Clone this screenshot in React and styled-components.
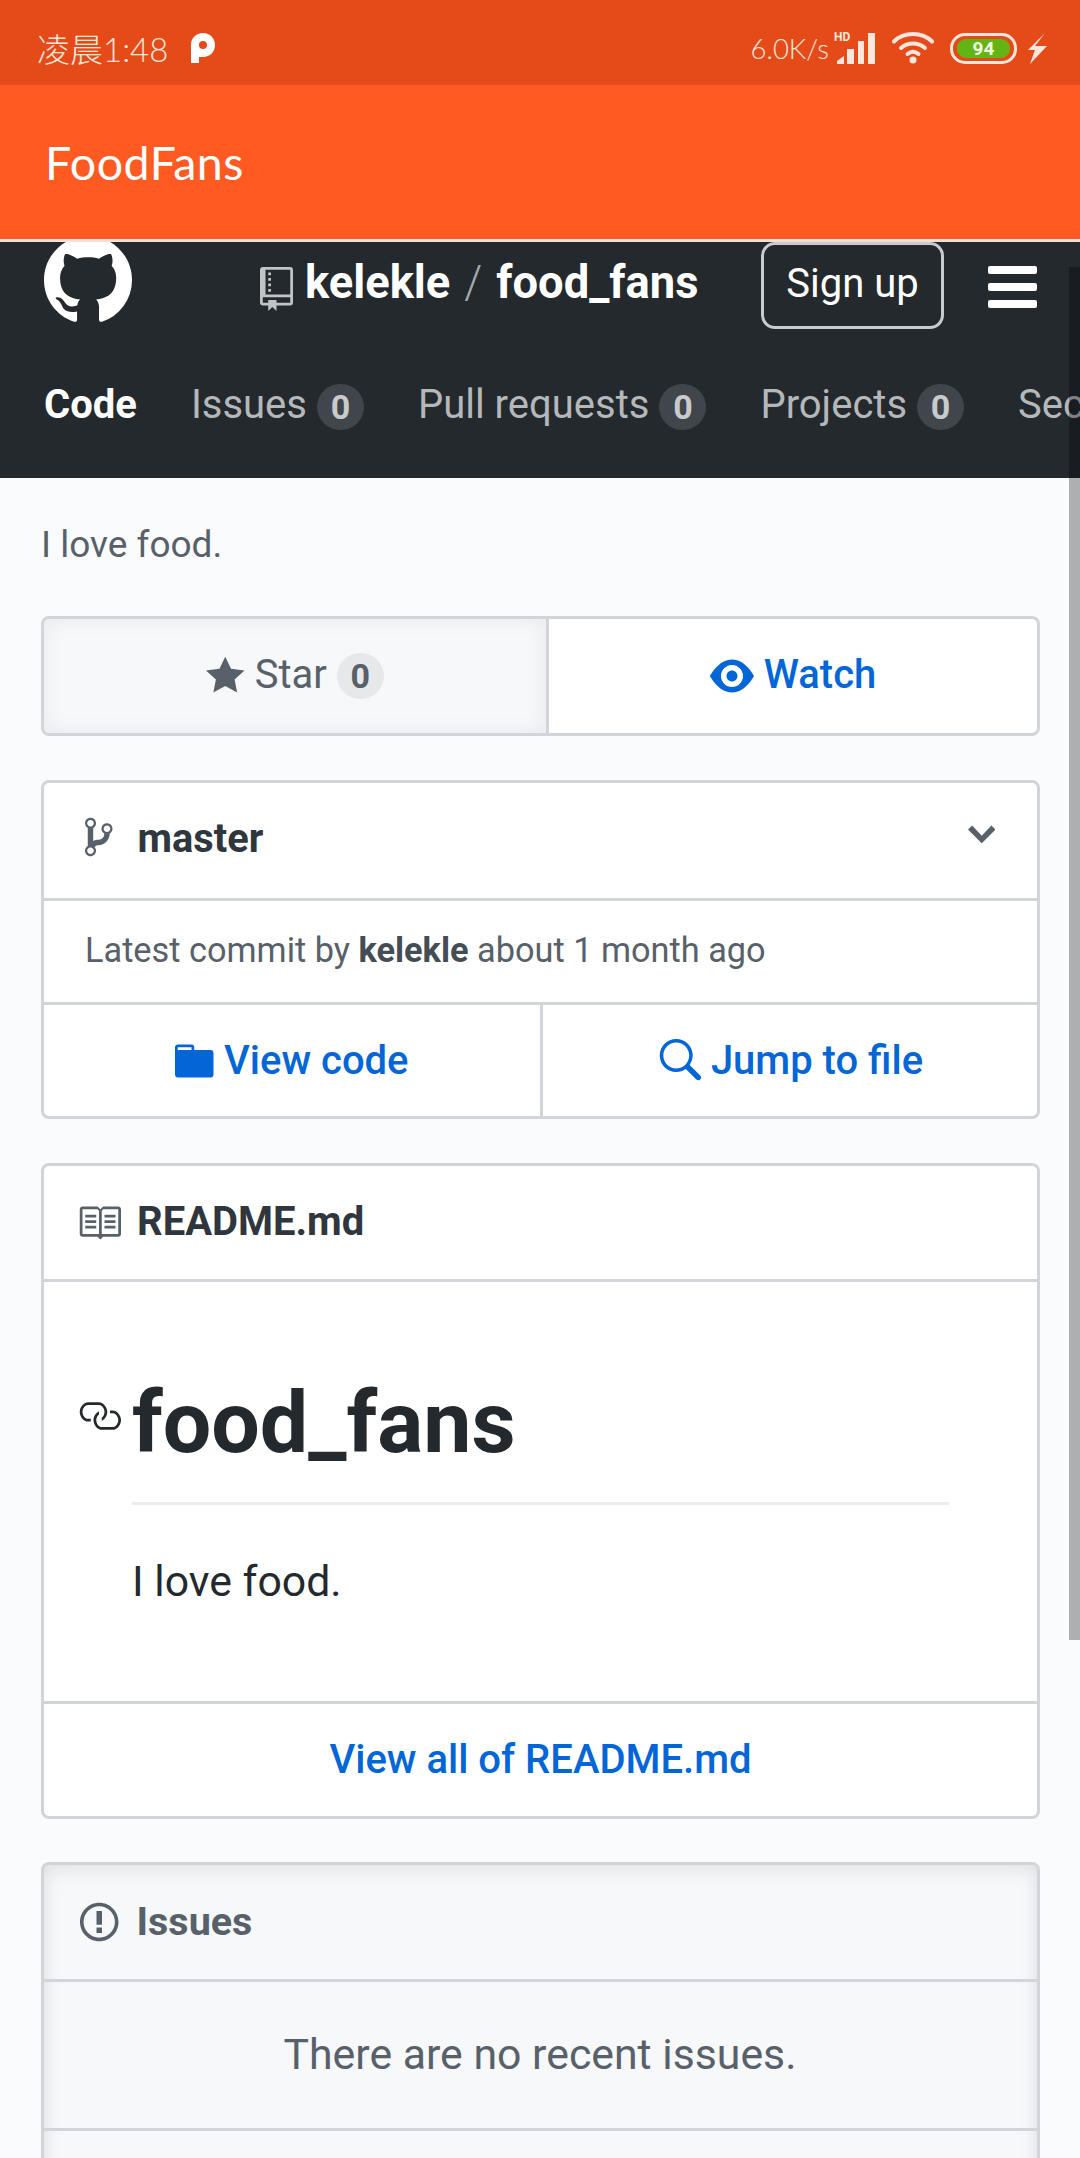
import React from "react";
import styled, { createGlobalStyle } from "styled-components";

const Global = createGlobalStyle`
  html, body { margin: 0; padding: 0; height: 2158px; overflow: hidden; background: #fafbfc; }
  body { font-family: Roboto, "Liberation Sans", sans-serif; color: #24292e; }
  * { box-sizing: border-box; }
  #root { height: 2158px; overflow: hidden; position: relative; }
`;

const StatusBar = styled.div`
  height: 85px; background: #e54b18; color: #fde6dc;
  display: flex; align-items: center; justify-content: space-between;
  padding: 11px 33px 0 37px; font-family: Lato, "Noto Sans CJK SC", sans-serif; font-weight: 300;
`;
const StatusGroup = styled.div`display: flex; align-items: center;`;
const Clock = styled.span`font-size: 33px; font-family: Lato, "Noto Sans CJK SC", sans-serif; font-weight: 300;`;
const Speed = styled.span`font-size: 27.500px;`;
const HdSignal = styled.div`position: relative; width: 41px; height: 32px; margin: 0 16px 0 6px;`;
const HdLabel = styled.span`
  position: absolute; left: -1px; top: -2px; font: 700 12px/14px Roboto, sans-serif; color: #fde6dc;
`;
const Battery = styled.div`
  width: 67px; height: 31px; border: 3px solid #fde6dc; border-radius: 15px; padding: 3px 4px;
  margin: 0 11px 0 16px; display: flex;
`;
const BatteryFill = styled.div`
  flex: 1; background: #62b515; border-radius: 9px; color: #f2ffe0;
  font: 700 19px/19px Roboto, sans-serif; text-align: center;
`;

const AppBar = styled.div`
  height: 154px; background: #ff5a22; color: #fff; display: flex; align-items: center;
  padding-left: 45px; font: 400 46.500px Lato, sans-serif; letter-spacing: 0.5px;
`;
const Divider = styled.div`height: 3px; background: #f0e2da;`;

const Header = styled.header`height: 236px; background: #24292e; overflow: hidden;`;
const TopRow = styled.div`
  display: flex; align-items: center; height: 87px; padding: 0 43px 0 44px;
`;
const Logo = styled.svg`
  width: 88px; height: 88px; fill: #fff; flex: none; align-self: flex-start; margin: -6px 128px 0 0;
`;
const RepoIcon = styled.svg`width: 33px; height: 44px; fill: #c1c4c6; flex: none; margin: 7px 12px 0 0;`;
const RepoTitle = styled.div`font-size: 45.300px; font-weight: 700; color: #fff; margin-top: -6px; white-space: nowrap;`;
const Slash = styled.span`font-weight: 300; color: #a7a9ab; margin: 0 14px;`;
const SignUp = styled.div`
  margin-left: auto; width: 183px; height: 87px; border: 3px solid #c8ccd0; border-radius: 14px; color: #fff;
  font-size: 40px; display: flex; align-items: center; justify-content: center; padding-bottom: 4px;
`;
const Burger = styled.div`
  width: 49px; margin-left: 44px; display: flex; flex-direction: column; gap: 9px; margin-top: 2px;
`;
const BurgerBar = styled.div`height: 8px; background: #fff; border-radius: 2px;`;
const Tabs = styled.nav`
  display: flex; align-items: center; gap: 54px; margin-top: 55px; padding-left: 44px; white-space: nowrap;
`;
const Tab = styled.div`
  display: flex; align-items: center; gap: 10px; font-size: 40px;
  color: ${p => (p.$active ? "#fff" : "#b5b8ba")}; font-weight: ${p => (p.$active ? 700 : 400)};
  margin-top: -6px;
`;
const Counter = styled.span`
  width: 47px; height: 46px; border-radius: 23px; display: flex; align-items: center; justify-content: center;
  font-size: 34px; font-weight: 700; flex: none;
  background: ${p => (p.$light ? "#e6e8ea" : "#41464c")}; color: ${p => (p.$light ? "#586069" : "#c8cacc")};
  margin-top: ${p => (p.$light ? "0" : "6px")};
`;

const Main = styled.main`padding: 38px 40px 0 41px;`;
const Intro = styled.p`margin: 0 0 42px; font-size: 37px; line-height: 58px; color: #586069;`;
const Card = styled.section`
  border: 3px solid #d1d5da; border-radius: 8px; overflow: hidden; margin-bottom: ${p => p.$mb ?? 44}px;
  background: ${p => (p.$muted ? "#f6f8fa" : "#fff")};
  ${p => p.$muted && "box-shadow: inset 0 5px 20px rgba(27,31,35,.07), inset 0 0 16px rgba(27,31,35,.05);"}
`;
const Split = styled.div`display: flex; height: ${p => p.$h}px;`;
const Action = styled.div`
  flex: ${p => (p.$w ? `0 0 ${p.$w}px` : "1")}; display: flex; align-items: center; justify-content: center; gap: 10px;
  font-size: 40px; font-weight: 500; color: #0366d6; min-width: 0;
  & + & { border-left: 3px solid #d1d5da; }
`;
const StarAction = styled(Action)`
  color: #586069; font-weight: 400; background: #f6f8fa;
  box-shadow: inset 0 0 20px rgba(27,31,35,.07);
`;
const RaisedLabel = styled.span`margin-top: -3px;`;
const Row = styled.div`
  height: ${p => p.$h}px; display: flex; align-items: center; padding-left: ${p => p.$pl || 0}px;
  border-bottom: ${p => (p.$noline ? "0" : "3px solid #d1d5da")};
  justify-content: ${p => (p.$center ? "center" : "flex-start")};
`;
const BranchIcon = styled.svg`width: 27.5px; height: 44px; fill: #586069; flex: none; margin: -7px 25px 0 0;`;
const BranchName = styled.strong`font-size: 39.800px; font-weight: 700; color: #2f363d; margin-top: -4px;`;
const Chevron = styled.svg`
  width: 27.5px; height: 44px; fill: #586069; flex: none; margin: -12px 42px 0 auto;
`;
const Commit = styled.div`font-size: 34.300px; color: #586069; margin-top: -3px; strong { font-weight: 700; color: #444d56; }`;
const Icon = styled.svg`height: 44px; width: ${p => p.$w || 44}px; fill: ${p => p.$c || "#0366d6"}; flex: none;`;
const ReadmeTitle = styled.strong`font-size: 40px; font-weight: 700; color: #2f363d; margin: -2px 0 0 16px;`;
const ReadmeBody = styled.div`padding: 0 88px 0 36px; height: 422px; border-bottom: 3px solid #d1d5da;`;
const HeadingRow = styled.div`display: flex; align-items: flex-start; padding-top: 89px;`;
const AnchorIcon = styled.svg`width: 44px; height: 44px; fill: #24292e; flex: none; margin: 23px 8px 0 -3px;`;
const Heading = styled.h1`
  flex: 1; margin: 0 0 0 3px; font-size: 86px; line-height: 103px; font-weight: 700; color: #24292e;
  padding-bottom: 28px; border-bottom: 3px solid #eaecef;
`;
const Para = styled.p`margin: 43px 0 0 52px; font-size: 42.800px; line-height: 66px; color: #24292e;`;
const FooterLink = styled.div`
  height: 112px; display: flex; align-items: center; justify-content: center; padding-bottom: 2px;
  font-size: 40px; font-weight: 500; color: #0366d6;
`;
const IssuesTitle = styled.strong`font-size: 39.500px; font-weight: 700; color: #586069; margin-left: 18px; margin-top: -1px;`;
const Empty = styled.div`font-size: 42.800px; color: #586069; margin: -2px 0 0 -1px;`;
const Scrollbar = styled.div`
  position: absolute; right: 0; top: 267px; width: 11px; height: 1373px; background: rgba(0,0,0,.3);
`;

const P = {
  github: "M8 0C3.58 0 0 3.58 0 8c0 3.54 2.29 6.53 5.47 7.59.4.07.55-.17.55-.38 0-.19-.01-.82-.01-1.49-2.01.37-2.53-.49-2.69-.94-.09-.23-.48-.94-.82-1.13-.28-.15-.68-.52-.01-.53.63-.01 1.08.58 1.23.82.72 1.21 1.87.87 2.33.66.07-.52.28-.87.51-1.07-1.78-.2-3.64-.89-3.64-3.95 0-.87.31-1.59.82-2.15-.08-.2-.36-1.02.08-2.12 0 0 .67-.21 2.2.82.64-.18 1.32-.27 2-.27.68 0 1.36.09 2 .27 1.53-1.04 2.2-.82 2.2-.82.44 1.1.16 1.92.08 2.12.51.56.82 1.27.82 2.15 0 3.07-1.87 3.75-3.65 3.95.29.25.54.73.54 1.48 0 1.07-.01 1.93-.01 2.2 0 .21.15.46.55.38A8.013 8.013 0 0016 8c0-4.42-3.58-8-8-8z",
  repo: "M4 9H3V8h1v1zm0-3H3v1h1V6zm0-2H3v1h1V4zm0-2H3v1h1V2zm8-1v12c0 .55-.45 1-1 1H6v2l-1.5-1.5L3 16v-2H1c-.55 0-1-.45-1-1V1c0-.55.45-1 1-1h10c.55 0 1 .45 1 1zm-1 10H1v2h2v-1h3v1h5v-2zm0-10H2v9h9V1z",
  star: "M14 6l-4.9-.64L7 1 4.9 5.36 0 6l3.6 3.26L2.67 14 7 11.67 11.33 14l-.93-4.74L14 6z",
  eye: "M8.06 2C3 2 0 8 0 8s3 6 8.06 6C13 14 16 8 16 8s-3-6-7.94-6zM8 12c-2.2 0-4-1.78-4-4 0-2.2 1.8-4 4-4 2.22 0 4 1.8 4 4 0 2.22-1.78 4-4 4zm2-4c0 1.11-.89 2-2 2-1.11 0-2-.89-2-2 0-1.11.89-2 2-2 1.11 0 2 .89 2 2z",
  branch: "M10 5c0-1.11-.89-2-2-2a1.993 1.993 0 00-1 3.72v.3c-.02.52-.23.98-.63 1.38-.4.4-.86.61-1.38.63-.83.02-1.48.16-2 .45V4.72a1.993 1.993 0 00-1-3.72C.88 1 0 1.89 0 3a2 2 0 001 1.72v6.56c-.59.35-1 .99-1 1.72 0 1.11.89 2 2 2 1.11 0 2-.89 2-2 0-.53-.2-1-.53-1.36.09-.06.48-.41.59-.47.25-.11.56-.17.94-.17 1.05-.05 1.95-.45 2.75-1.25S8.95 7.77 9 6.73h-.02C9.59 6.37 10 5.73 10 5zM2 1.8c.66 0 1.2.55 1.2 1.2 0 .65-.55 1.2-1.2 1.2C1.35 4.2.8 3.65.8 3c0-.65.55-1.2 1.2-1.2zm0 12.41c-.66 0-1.2-.55-1.2-1.2 0-.65.55-1.2 1.2-1.2.65 0 1.2.55 1.2 1.2 0 .65-.55 1.2-1.2 1.2zm6-8c-.66 0-1.2-.55-1.2-1.2 0-.65.55-1.2 1.2-1.2.65 0 1.2.55 1.2 1.2 0 .65-.55 1.2-1.2 1.2z",
  chevron: "M5 11L0 6l1.5-1.5L5 8.25 8.5 4.5 10 6l-5 5z",
  folder: "M13 4H7V3c0-.66-.31-1-1-1H1c-.55 0-1 .45-1 1v10c0 .55.45 1 1 1h12c.55 0 1-.45 1-1V5c0-.55-.45-1-1-1zM6 4H1V3h5v1z",
  search: "M15.7 13.3l-3.81-3.83A5.93 5.93 0 0013 6c0-3.31-2.69-6-6-6S1 2.69 1 6s2.69 6 6 6c1.3 0 2.48-.41 3.47-1.11l3.83 3.81c.19.2.45.3.7.3.25 0 .52-.09.7-.3a.996.996 0 000-1.41v.01zM7 10.7c-2.59 0-4.7-2.11-4.7-4.7 0-2.59 2.11-4.7 4.7-4.7 2.59 0 4.7 2.11 4.7 4.7 0 2.59-2.11 4.7-4.7 4.7z",
  book: "M3 5h4v1H3V5zm0 3h4V7H3v1zm0 2h4V9H3v1zm11-5h-4v1h4V5zm0 2h-4v1h4V7zm0 2h-4v1h4V9zm2-6v9c0 .55-.45 1-1 1H9.5l-1 1-1-1H2c-.55 0-1-.45-1-1V3c0-.55.45-1 1-1h5.5l1 1 1-1H15c.55 0 1 .45 1 1zm-8 .5L7.5 3H2v9h6V3.5zm7-.5H9.5l-.5.5V12h6V3z",
  link: "M4 9h1v1H4c-1.5 0-3-1.69-3-3.5S2.55 3 4 3h4c1.45 0 3 1.69 3 3.5 0 1.41-.91 2.72-2 3.25V8.59c.58-.45 1-1.27 1-2.09C10 5.22 8.98 4 8 4H4c-.98 0-2 1.22-2 2.5S3 9 4 9zm9-3h-1v1h1c1 0 2 1.22 2 2.5S13.98 12 13 12H9c-.98 0-2-1.22-2-2.5 0-.83.42-1.64 1-2.09V6.25c-1.09.53-2 1.84-2 3.25C6 11.31 7.55 13 9 13h4c1.45 0 3-1.69 3-3.5S14.5 6 13 6z",
  issue: "M7 2.3c3.14 0 5.7 2.56 5.7 5.7s-2.56 5.7-5.7 5.7A5.71 5.71 0 011.3 8c0-3.14 2.56-5.7 5.7-5.7zM7 1C3.14 1 0 4.14 0 8s3.14 7 7 7 7-3.14 7-7-3.14-7-7-7zm1 3H6v5h2V4zm0 6H6v2h2v-2z",
};

const tabs = [
  { label: "Code", active: true },
  { label: "Issues", n: 0 },
  { label: "Pull requests", n: 0 },
  { label: "Projects", n: 0 },
  { label: "Security" },
];

export default function App() {
  return (
    <>
      <Global />
      <StatusBar>
        <StatusGroup>
          <Clock>凌晨1:48</Clock>
          <svg width="24" height="30" viewBox="0 0 24 30" style={{ marginLeft: 23 }}>
            <path fill="#fff" fillRule="evenodd" d="M0 30V12C0 5 5 0 12 0s12 5 12 12-5 12-12 12H8v6H0zm12-14a4 4 0 100-8 4 4 0 000 8z" />
          </svg>
        </StatusGroup>
        <StatusGroup>
          <Speed>6.0K/s</Speed>
          <HdSignal>
            <HdLabel>HD</HdLabel>
            <svg width="41" height="32" viewBox="0 0 41 32">
              <g fill="#fde6dc">
                <path d="M2 32v-3l7-5v8z" />
                <rect x="12" y="17" width="7" height="15" />
                <rect x="23" y="9" width="6" height="23" />
                <rect x="33" y="1" width="7" height="31" />
              </g>
            </svg>
          </HdSignal>
          <svg width="42" height="32" viewBox="0 0 42 32">
            <g fill="none" stroke="#fde6dc" strokeWidth="4" strokeLinecap="round">
              <path d="M2 9.500C12-.5 30-.5 40 9.500" />
              <path d="M9 16c7-6 17-6 24 0" />
              <path d="M15.500 22c3.500-2.800 7.500-2.800 11 0" />
            </g>
            <circle cx="21" cy="28" r="3.500" fill="#fde6dc" />
          </svg>
          <Battery><BatteryFill>94</BatteryFill></Battery>
          <svg width="19" height="31" viewBox="0 0 19 31">
            <path fill="#fde6dc" d="M17 0L7 13h12L2 31l5-14H0z" />
          </svg>
        </StatusGroup>
      </StatusBar>
      <AppBar>FoodFans</AppBar>
      <Divider />
      <Header>
        <TopRow>
          <Logo viewBox="0 0 16 16"><path fillRule="evenodd" d={P.github} /></Logo>
          <RepoIcon viewBox="0 0 12 16"><path fillRule="evenodd" d={P.repo} /></RepoIcon>
          <RepoTitle>kelekle<Slash>/</Slash>food_fans</RepoTitle>
          <SignUp>Sign up</SignUp>
          <Burger><BurgerBar /><BurgerBar /><BurgerBar /></Burger>
        </TopRow>
        <Tabs>
          {tabs.map(t => (
            <Tab key={t.label} $active={t.active}>
              {t.label}
              {t.n !== undefined && <Counter>{t.n}</Counter>}
            </Tab>
          ))}
        </Tabs>
      </Header>
      <Main>
        <Intro>I love food.</Intro>
        <Card>
          <Split $h={114}>
            <StarAction $w={502}>
              <Icon viewBox="0 0 14 16" $w={38.5} $c="#586069"><path d={P.star} /></Icon>
              <RaisedLabel>Star</RaisedLabel>
              <Counter $light>0</Counter>
            </StarAction>
            <Action>
              <Icon viewBox="0 0 16 16"><path fillRule="evenodd" d={P.eye} /></Icon>
              <RaisedLabel>Watch</RaisedLabel>
            </Action>
          </Split>
        </Card>
        <Card>
          <Row $h={118} $pl={41}>
            <BranchIcon viewBox="0 0 10 16"><path fillRule="evenodd" d={P.branch} /></BranchIcon>
            <BranchName>master</BranchName>
            <Chevron viewBox="0 0 10 16"><path fillRule="evenodd" d={P.chevron} /></Chevron>
          </Row>
          <Row $h={104} $pl={41}>
            <Commit>Latest commit by <strong>kelekle</strong> about 1 month ago</Commit>
          </Row>
          <Split $h={111}>
            <Action $w={496}>
              <Icon viewBox="0 0 14 16" $w={38.5}><path fillRule="evenodd" d={P.folder} /></Icon>
              View code
            </Action>
            <Action>
              <Icon viewBox="0 0 16 16"><path fillRule="evenodd" d={P.search} /></Icon>
              Jump to file
            </Action>
          </Split>
        </Card>
        <Card $mb={43}>
          <Row $h={116} $pl={33}>
            <Icon viewBox="0 0 16 16" $c="#586069"><path fillRule="evenodd" d={P.book} /></Icon>
            <ReadmeTitle>README.md</ReadmeTitle>
          </Row>
          <ReadmeBody>
            <HeadingRow>
              <AnchorIcon viewBox="0 0 16 16"><path fillRule="evenodd" d={P.link} /></AnchorIcon>
              <Heading>food_fans</Heading>
            </HeadingRow>
            <Para>I love food.</Para>
          </ReadmeBody>
          <FooterLink>View all of README.md</FooterLink>
        </Card>
        <Card $muted>
          <Row $h={117} $pl={36}>
            <Icon viewBox="0 0 14 16" $w={38.5} $c="#586069"><path fillRule="evenodd" d={P.issue} /></Icon>
            <IssuesTitle>Issues</IssuesTitle>
          </Row>
          <Row $h={149} $center>
            <Empty>There are no recent issues.</Empty>
          </Row>
          <Row $h={120} $noline />
        </Card>
      </Main>
      <Scrollbar />
    </>
  );
}
